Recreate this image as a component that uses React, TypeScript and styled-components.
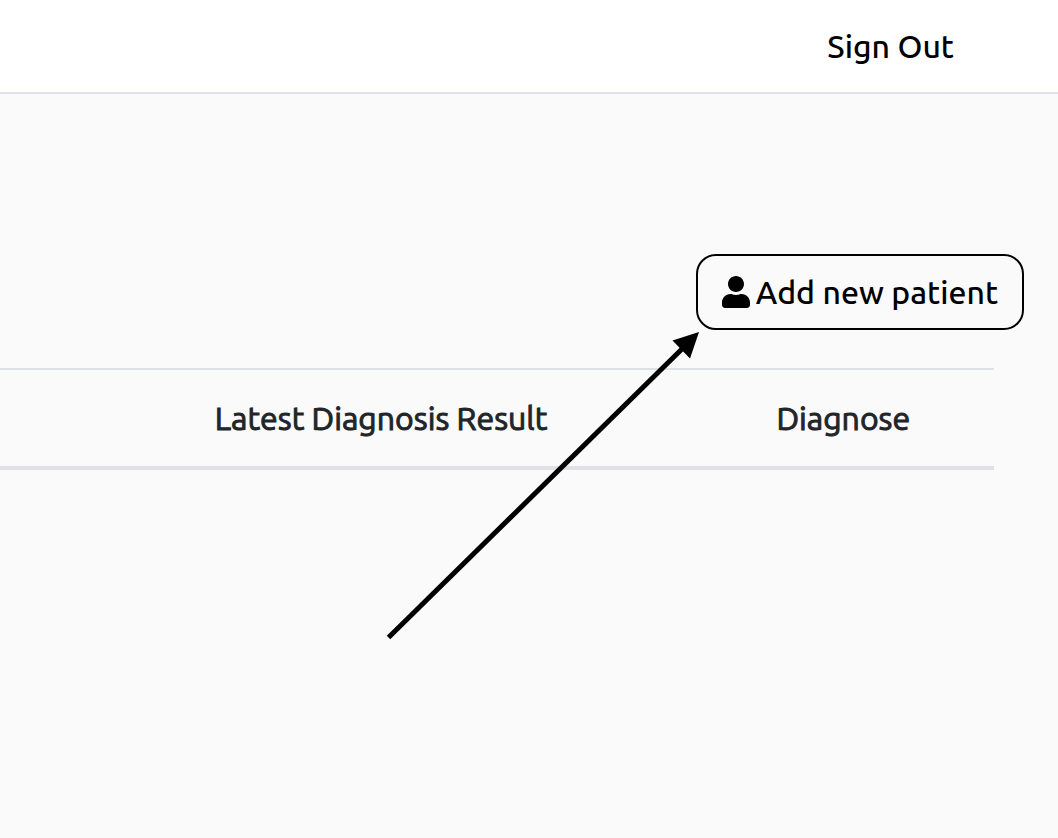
import React from "react";
import styled, { createGlobalStyle } from "styled-components";

const GlobalStyle = createGlobalStyle`
  * { box-sizing: border-box; }
  body {
    margin: 0;
    background: #fafafa;
    color: #000;
    font-family: Ubuntu, "Noto Sans", sans-serif;
    font-size: 32px;
    font-weight: 500;
    line-height: 48px;
  }
`;

const Page = styled.div`
  position: relative;
  min-height: 100vh;
`;

const TopBar = styled.header`
  display: flex;
  justify-content: flex-end;
  padding: 22px 104px 22px 32px;
  background: #fff;
  border-bottom: 2px solid #dee2e6;
`;

const NavLink = styled.a`
  color: #000;
  text-decoration: none;
`;

const Toolbar = styled.div`
  display: flex;
  justify-content: flex-end;
  padding: 160px 34px 38px 32px;
`;

const OutlineButton = styled.button`
  display: flex;
  align-items: center;
  gap: 6px;
  padding: 12px 24px;
  border: 2px solid #000;
  border-radius: 20px;
  background: transparent;
  color: #000;
  font: inherit;
  cursor: pointer;
`;

const UserIcon = styled.svg`
  width: 28px;
  height: 32px;
  fill: currentColor;
`;

const TableWrap = styled.div`
  padding-right: 64px;
`;

const PatientTable = styled.table`
  width: 100%;
  border-collapse: separate;
  border-spacing: 0;
  table-layout: fixed;
`;

const HeadCell = styled.th<{ $width: string }>`
  width: ${(p) => p.$width};
  height: 102px;
  padding: 0 16px;
  border-top: 2px solid #dee2e6;
  border-bottom: 4px solid #dee2e6;
  color: #212529;
  font-weight: 400;
  -webkit-text-stroke: 1px #212529;
  text-align: left;
  white-space: nowrap;
`;

const Arrow = styled.svg`
  position: absolute;
  top: 330px;
  right: 358px;
  width: 314px;
  height: 312px;
  pointer-events: none;
`;

const columns = [
  { label: "", width: "20%" },
  { label: "Latest Diagnosis Result", width: "56.5%" },
  { label: "Diagnose", width: "23.5%" },
];

export default function App() {
  return (
    <Page>
      <GlobalStyle />
      <TopBar>
        <NavLink href="#sign-out">Sign Out</NavLink>
      </TopBar>
      <main>
        <Toolbar>
          <OutlineButton type="button">
            <UserIcon viewBox="0 0 448 512" aria-hidden="true">
              <path d="M224 256c70.7 0 128-57.3 128-128S294.7 0 224 0 96 57.3 96 128s57.3 128 128 128zm89.6 32h-16.7c-22.2 10.2-46.9 16-72.9 16s-50.6-5.8-72.9-16h-16.7C60.2 288 0 348.2 0 422.4V464c0 26.5 21.5 48 48 48h352c26.5 0 48-21.5 48-48v-41.6c0-74.2-60.2-134.4-134.4-134.4z" />
            </UserIcon>
            Add new patient
          </OutlineButton>
        </Toolbar>
        <TableWrap>
          <PatientTable>
            <thead>
              <tr>
                {columns.map((c) => (
                  <HeadCell key={c.width} $width={c.width} scope="col">
                    {c.label}
                  </HeadCell>
                ))}
              </tr>
            </thead>
          </PatientTable>
        </TableWrap>
      </main>
      <Arrow viewBox="386 330 314 312" aria-hidden="true">
        <path d="M388.500 637.500L684 347" stroke="#000" strokeWidth="5" />
        <path d="M699 332L672.500 340.500L690 358.500Z" />
      </Arrow>
    </Page>
  );
}
